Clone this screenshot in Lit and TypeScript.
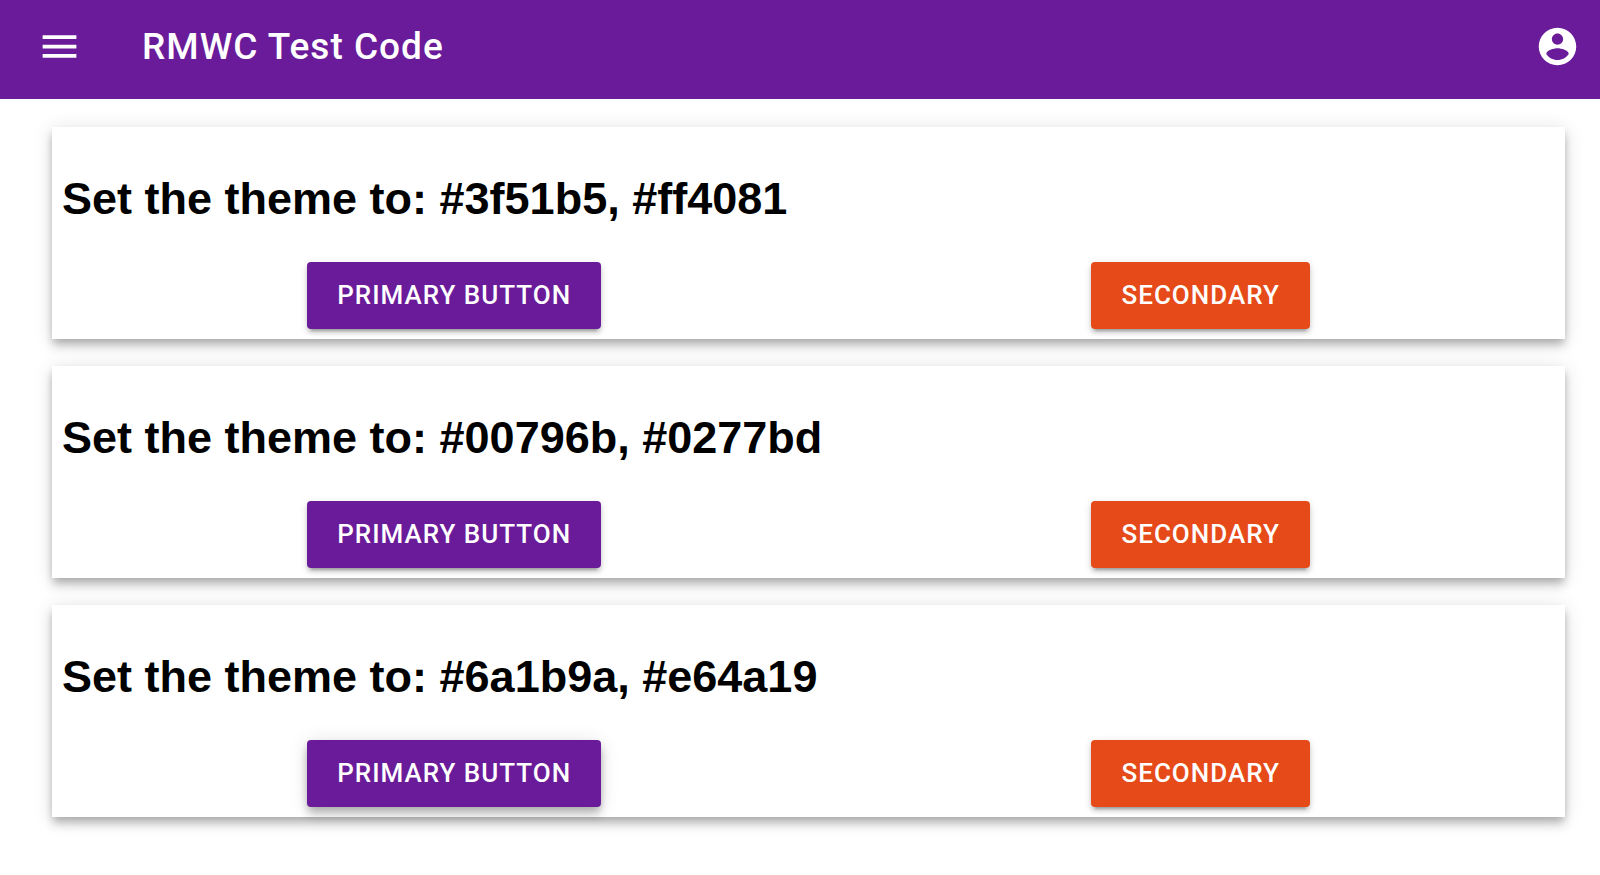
import { LitElement, css, html } from "lit";
import { customElement, property } from "lit/decorators.js";

@customElement("theme-card")
class ThemeCard extends LitElement {
  @property() primary = "";
  @property() secondary = "";
  @property({ type: Boolean }) raised = false;

  static styles = css`
    :host {
      display: block;
    }
    .card {
      padding: 10px;
      background: #fff;
      box-shadow:
        0 4px 8px -2px rgba(0, 0, 0, 0.2),
        0 8px 9px 0 rgba(0, 0, 0, 0.14),
        0 2px 19px 0 rgba(0, 0, 0, 0.12);
    }
    .heading {
      margin: 36px 0 37px;
      font: 700 45px/52px "Liberation Sans", Arial, sans-serif;
      color: #000;
    }
    .actions {
      display: flex;
      justify-content: space-around;
    }
    .button {
      height: 67px;
      padding: 0 30px;
      border: 0;
      border-radius: 4px;
      color: #fff;
      font: 500 26px/67px Roboto, sans-serif;
      letter-spacing: 1px;
      text-transform: uppercase;
      cursor: pointer;
      box-shadow:
        0 6px 2px -4px rgba(0, 0, 0, 0.2),
        0 4px 4px 0 rgba(0, 0, 0, 0.14),
        0 2px 9px 0 rgba(0, 0, 0, 0.12);
    }
    .primary {
      background: #6a1b9a;
    }
    .secondary {
      background: #e64a19;
    }
    .raised {
      box-shadow:
        0 4px 8px -2px rgba(0, 0, 0, 0.2),
        0 8px 9px 0 rgba(0, 0, 0, 0.14),
        0 2px 19px 0 rgba(0, 0, 0, 0.12);
    }
  `;

  render() {
    return html`
      <section class="card">
        <h2 class="heading">Set the theme to: ${this.primary}, ${this.secondary}</h2>
        <div class="actions">
          <button type="button" class="button primary ${this.raised ? "raised" : ""}">Primary Button</button>
          <button type="button" class="button secondary">Secondary</button>
        </div>
      </section>
    `;
  }
}

@customElement("app-root")
class AppRoot extends LitElement {
  static styles = css`
    :host {
      display: block;
      min-height: 100vh;
      background: #fff;
    }
    .bar {
      display: flex;
      align-items: center;
      padding: 24px 20px 30px 37px;
      background: #6a1b9a;
      color: #fff;
    }
    .title {
      flex: 1;
      margin: 0 0 0 60px;
      font: 500 37px/45px Roboto, sans-serif;
      letter-spacing: 1px;
    }
    .icon-button {
      display: block;
      padding: 0;
      border: 0;
      background: none;
      color: inherit;
      cursor: pointer;
    }
    .icon {
      display: block;
      width: 45px;
      height: 45px;
      fill: currentColor;
    }
    .content {
      display: grid;
      gap: 27px;
      padding: 28px 35px 28px 52px;
    }
  `;

  private themes = [
    { primary: "#3f51b5", secondary: "#ff4081" },
    { primary: "#00796b", secondary: "#0277bd" },
    { primary: "#6a1b9a", secondary: "#e64a19", raised: true },
  ];

  render() {
    return html`
      <header class="bar">
        <button type="button" class="icon-button" aria-label="Menu">
          <svg class="icon" viewBox="0 0 24 24" aria-hidden="true">
            <path d="M3 18h18v-2H3v2zm0-5h18v-2H3v2zm0-7v2h18V6H3z" />
          </svg>
        </button>
        <h1 class="title">RMWC Test Code</h1>
        <button type="button" class="icon-button" aria-label="Account">
          <svg class="icon" viewBox="0 0 24 24" aria-hidden="true">
            <path
              d="M12 2C6.480 2 2 6.480 2 12s4.480 10 10 10 10-4.480 10-10S17.520 2 12 2zm0 3c1.660 0 3 1.340 3 3s-1.340 3-3 3-3-1.340-3-3 1.340-3 3-3zm0 14.200c-2.500 0-4.710-1.280-6-3.220.030-1.990 4-3.080 6-3.080 1.990 0 5.970 1.090 6 3.080-1.290 1.940-3.500 3.220-6 3.220z"
            />
          </svg>
        </button>
      </header>
      <main class="content">
        ${this.themes.map(
          (t) => html`<theme-card .primary=${t.primary} .secondary=${t.secondary} .raised=${!!t.raised}></theme-card>`
        )}
      </main>
    `;
  }
}
